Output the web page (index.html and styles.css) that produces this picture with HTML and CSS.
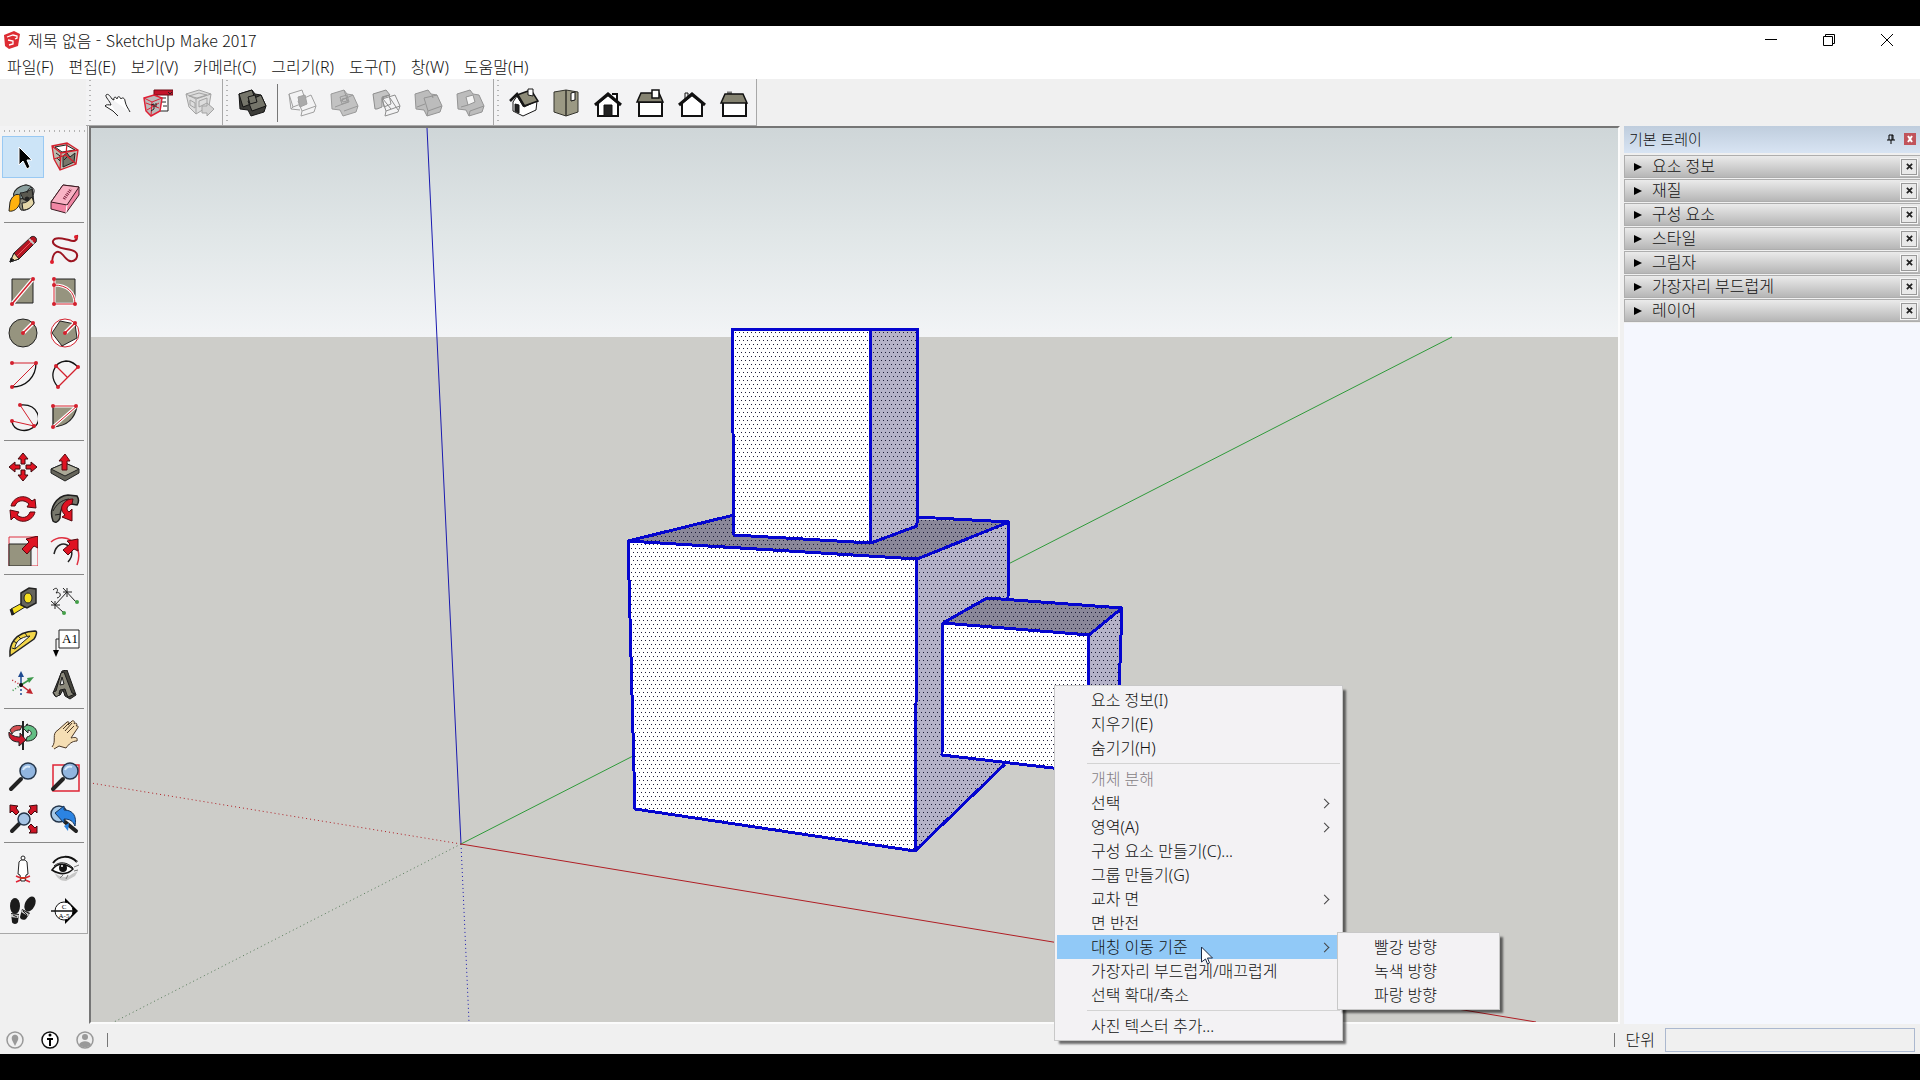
FILE: index.html
```html
<!DOCTYPE html>
<html lang="ko">
<head>
<meta charset="utf-8">
<title>제목 없음 - SketchUp Make 2017</title>
<link rel="stylesheet" href="styles.css">
</head>
<body>
<div class="window">
  <header class="titlebar">
    <svg class="logo" viewBox="0 0 16 18"><path d="M0 4 10 0l6 3-2 12-9 3-4-3z" fill="#dd2c33"/><path d="M3 6 9 4l4 1v2l-2 1M4 9l5 1v3l-4 1" fill="none" stroke="#fff" stroke-width="1.300"/></svg>
    <h1 class="title">제목 없음 - SketchUp Make 2017</h1>
    <div class="controls">
      <button aria-label="최소화"><svg viewBox="0 0 12 12"><path d="M0 5.5h12"/></svg></button>
      <button aria-label="이전 크기로"><svg viewBox="0 0 12 12"><path d="M.5 2.5h9v9h-9zM2.500 2.500v-2h9v9h-2"/></svg></button>
      <button aria-label="닫기"><svg viewBox="0 0 12 12"><path d="m0 0 12 12M12 0 0 12"/></svg></button>
    </div>
  </header>
  <nav class="menubar">
    <button>파일(F)</button><button>편집(E)</button><button>보기(V)</button><button>카메라(C)</button><button>그리기(R)</button><button>도구(T)</button><button>창(W)</button><button>도움말(H)</button>
  </nav>

  <div class="toolbars">
    <div class="toolbar">
      <button aria-label="상호 작용"><svg viewBox="0 0 30 30"><path d="M5 7c2-2 4 1 6 4l2 1c-1-3 2-4 3-1 0-3 3-3 4 0 1-2 4-1 4 2 1 5 3 7 5 11M5 7c-1 2 4 6 5 10-2 0-5-1-6 1l8 5 5 5" fill="#fff" stroke="#222"/></svg></button>
      <button aria-label="구성 요소 옵션"><svg viewBox="0 0 30 30"><path d="M14 5h11v18H14z" fill="#fff" stroke="#222"/><path d="M11 2h19v5H11z" fill="#c4142a" stroke="#6d0c16"/><path d="m25 4 2 2 2-2M17 10h6M19 14h4M20 18h4" stroke="#222" fill="none"/><path d="m1 10 10-3 8 3-2 13-9 5-5-5z" fill="#bbb" stroke="#df2035" stroke-width="1.500"/><path d="m1 10 8 4 10-4M9 14l-1 14M3 15l13 5M4 22l12-7" fill="none" stroke="#df2035"/><path d="m8 17 3-1v5l-3 2M13 15v4" stroke="#222" fill="none"/></svg></button>
      <button aria-label="구성 요소 특성"><svg viewBox="0 0 30 30" fill="none" stroke="#a3a3a3"><path d="m1 6 13-4 12 4-2 12-13 8-7-7z" fill="#ddd"/><path d="m1 6 10 5 15-5M11 11v15M4 8l10-3 8 2-10 3zM5 12l5 3v5l-5-3zM14 13l8-3v5l-8 4z"/><path d="M17 18h5v-3l7 6-7 7v-3h-5z" fill="#d2d2d2"/></svg></button>
    </div>
    <div class="toolbar">
      <button aria-label="외부 셸"><svg viewBox="0 0 30 30" fill="#75756a" stroke="#151515"><path d="m1 6 13-4 3 4 6 1 5 11-2 6-13 4-3-6-8-1z" fill="#3c3c38"/><path d="m1 6 13-4 4 12-13 5z"/><path d="m10 13 13-6 5 11-14 5z"/><path d="m10 9 7-2 2 7-7 2z"/></svg></button>
      <span class="divider"></span>
      <button aria-label="교차"><svg viewBox="0 0 30 30" fill="none" stroke="#a0a0a0"><path d="m1 6 13-4 4 12-13 5zM10 13l13-6 5 11-14 5zM1 6l2 15 9 1M14 23l-1 5 13-4 2-6M3 21l2-2"/><path d="m10 9 7-2 2 9-7 3z" fill="#aaa"/></svg></button>
      <button aria-label="결합"><svg viewBox="0 0 30 30" fill="#c2c2c2" stroke="#9a9a9a"><path d="m1 6 13-4 3 4 6 1 5 11-2 6-13 4-3-6-8-1z"/><path d="M14 2l4 12-13 5M10 13l13-6M14 23l14-5M10 9l7-2 2 7-7 2zM12 11l4-1 1 3-4 1z" fill="none"/></svg></button>
      <button aria-label="빼기"><svg viewBox="0 0 30 30" fill="none" stroke="#8e8e8e"><path d="m1 6 13-4 4 5-8 3v9l-5 2H3z" fill="#c4c4c4"/><path d="m10 11 13-4 5 11-14 5zM14 23l-1 5 13-4 2-6M11 11l8 10M10 9l7-2 2 9-7 3zM18 10l8 12"/></svg></button>
      <button aria-label="다듬기"><svg viewBox="0 0 30 30" fill="#bcbcbc" stroke="#949494"><path d="m1 6 13-4 3 4 6 1 5 11-2 6-13 4-3-6-8-1z"/><path d="M3 19l8-3M10 10l13-3M10 10l4 13 14-5M14 23l-1 5M18 7l1 3" fill="none"/></svg></button>
      <button aria-label="분할"><svg viewBox="0 0 30 30" fill="#bcbcbc" stroke="#949494"><path d="m1 6 13-4 3 4 6 1 5 11-2 6-13 4-3-6-8-1z"/><path d="m10 9 7-2 2 7-7 3z" fill="#f4f4f4"/><path d="M5 19l7-2M14 23l14-5M14 23l-1 5" fill="none"/></svg></button>
    </div>
    <div class="toolbar">
      <button aria-label="등각 투영"><svg viewBox="0 0 30 30" stroke="#161616"><path d="m4 14 4-6 7 11 13-6-1 9-13 6-10-5z" fill="#fff"/><path d="m8 7 14-5 7 11-14 5z" fill="#8d8b78" stroke-width="1.500"/><path d="M1 13 8 6l7 12" fill="none" stroke-width="2.500"/><path d="M6 16l4 1v8l-4-2z" fill="#222"/><path d="M19 1h5v7l-5-1z" fill="#fff"/></svg></button>
      <button aria-label="위"><svg viewBox="0 0 30 30" stroke="#33332c"><path d="m3 4 12-2 12 2v20l-12 4-12-4z" fill="#9b9984"/><path d="M15 2v26" stroke-width="1.500"/><path d="m20 5 4-1v8l-4 1z" fill="#fff" stroke="#111"/></svg></button>
      <button aria-label="앞"><svg viewBox="0 0 30 30" stroke="#111"><path d="M19 6h5v8M5 15 15 7l10 8v13H5z" fill="#fff" stroke-width="2"/><path d="M2 17 15 6l13 11" fill="none" stroke-width="3"/><path d="M11 17h8v11h-8z" fill="#222"/></svg></button>
      <button aria-label="오른쪽"><svg viewBox="0 0 30 30" stroke="#111"><path d="M4 14h23v14H4z" fill="#fff" stroke-width="2"/><path d="M6 5h18l4 9H2z" fill="#858371" stroke-width="1.500"/><path d="M17 2h7v8h-7z" fill="#fff" stroke-width="1.500"/></svg></button>
      <button aria-label="뒤"><svg viewBox="0 0 30 30" stroke="#111"><path d="M8 12V5h3v6" fill="#eee"/><path d="M5 15 15 7l10 8v13H5z" fill="#fff" stroke-width="2"/><path d="M2 17 15 6l13 11" fill="none" stroke-width="3"/></svg></button>
      <button aria-label="왼쪽"><svg viewBox="0 0 30 30" stroke="#111"><path d="M8 5h5" stroke-width="3" stroke="#777"/><path d="M4 14h23v14H4z" fill="#fff" stroke-width="2"/><path d="M6 6h18l4 9H2z" fill="#858371" stroke-width="1.500"/></svg></button>
    </div>
  </div>

  <main class="workspace">
    <aside class="palette">
      <div class="tools">
        <button class="selected" aria-label="선택"><svg viewBox="0 0 30 30"><path d="M11 5v18l4-4 4 8 3-2-3-7h5z" fill="#000" stroke="#fff"/></svg></button>
        <button aria-label="구성 요소"><svg viewBox="0 0 30 30" fill="none"><path d="m2 4 15-3 11 7-2 14-16 6-6-11z" fill="#bcbcb0"/><path d="m5 5 11-2 9 5-13 2z" fill="#fff" stroke="#222"/><path d="m13 14 4-3 3 4 5-4-1 9-11 5z" fill="#77776a" stroke="#222"/><path d="m6 11 4 3v5M14 18l4-4M7 16l4 4" stroke="#222"/><path d="m2 4 15-3 11 7-2 14-16 6-6-11zM2 4l9 7 17-3M11 11l-1 17M17 1l-1 12M4 17l12-4 10 9" stroke="#d3202d" stroke-width="1.300"/></svg></button>
        <button aria-label="페인트통"><svg viewBox="0 0 30 30" stroke="#222"><path d="m8 6 9-5c5 0 9 5 8 10l1 8c-3 6-9 8-13 7L7 15z" fill="#8f8d7c"/><path d="M14 19c4 0 7-2 10-6l2 6c-2 4-6 7-11 7z" fill="#e4d6a8"/><ellipse cx="15" cy="8" rx="10" ry="6" transform="rotate(-25 15 8)" fill="#8ba09f"/><path d="M12 9c4 0 8-2 12-4l1 8-9 3z" fill="#5a5950"/><path d="M19 9c2-9 10-6 6 2" fill="none"/><path d="M12 11c-4-2-8 1-10 7l-1 9c4 1 9-2 11-8z" fill="#ffb20f"/><circle cx="19" cy="15" r="2" fill="#222"/></svg></button>
        <button aria-label="지우개"><svg viewBox="0 0 30 30" stroke="#3b1b22"><path d="m1 18 12-17 16 2v8L16 29 1 25z" fill="#f086a4"/><path d="m1 18 12-17 16 2-12 18z" fill="#f9b3c5"/><path d="m17 21-1 8" stroke="#fff"/><path d="m14 15 7-10" stroke="#79203b" stroke-width="3" stroke-dasharray="1 1"/></svg></button>
      </div>
      <div class="tools">
        <button aria-label="선"><svg viewBox="0 0 30 30" stroke="#222"><path d="m2 28 4-9L23 3c3-2 7 1 5 5L11 25z" fill="#b51622"/><path d="m2 28 4-9 5 6z" fill="#eed9a5"/><path d="m9 22 16-16" stroke="#ef5a62"/><path d="m21 5 5 5" stroke="#ccc" stroke-width="2"/><path d="m2 28 1-4 3 2z" fill="#111"/></svg></button>
        <button aria-label="자유형"><svg viewBox="0 0 30 30"><path d="M2 28C3 16 9 16 13 21s8 9 13 4c4-7-3-9-10-10S2 11 3 7c2-5 11-2 16-1 5 2 9 1 8-5" fill="none" stroke="#9c1420" stroke-width="2"/><g fill="#df1f2d"><circle cx="2" cy="28" r="2"/><circle cx="26" cy="3" r="2"/></g></svg></button>
        <button aria-label="직사각형"><svg viewBox="0 0 30 30"><path d="M4 3h21v24H4z" fill="#96947f" stroke="#222"/><path d="M4 28 25 3" stroke="#fff" stroke-width="4"/><path d="M4 28 25 3" stroke="#d3202d" stroke-width="1.500"/><g fill="#d3202d"><circle cx="4" cy="28" r="2"/><circle cx="25" cy="3" r="2"/></g></svg></button>
        <button aria-label="회전 사각형"><svg viewBox="0 0 30 30"><path d="M4 3h21v24H4z" fill="#96947f" stroke="#222"/><path d="M4 2v26h21c0-12-8-19-21-19" fill="none" stroke="#fff" stroke-width="3"/><path d="M4 2v26h21c0-12-8-19-21-19" fill="none" stroke="#d3202d"/><g fill="#d3202d"><circle cx="4" cy="3" r="2"/><circle cx="4" cy="9" r="2"/><circle cx="4" cy="28" r="2"/><circle cx="25" cy="28" r="2"/></g></svg></button>
        <button aria-label="원"><svg viewBox="0 0 30 30"><circle cx="15" cy="15" r="14" fill="#96947f" stroke="#222"/><path d="m15 15 9-9" stroke="#fff" stroke-width="4"/><path d="m15 15 9-9" stroke="#d3202d" stroke-width="1.500"/><g fill="#d3202d"><circle cx="15" cy="15" r="2"/><circle cx="25" cy="5" r="2"/></g></svg></button>
        <button aria-label="다각형"><svg viewBox="0 0 30 30"><circle cx="15" cy="15" r="14" fill="#fff" stroke="#d3202d"/><path d="m2 15 8-12 15 3 2 14-15 8z" fill="#96947f" stroke="#222"/><path d="m15 15 9-9" stroke="#fff" stroke-width="4"/><path d="m15 15 9-9" stroke="#d3202d" stroke-width="1.500"/><g fill="#d3202d"><circle cx="15" cy="15" r="2"/><circle cx="25" cy="5" r="2"/></g></svg></button>
        <button aria-label="호"><svg viewBox="0 0 30 30" fill="none"><path d="M28 3c0 14-10 24-24 24" stroke="#111" stroke-width="1.300"/><path d="M4 3h24L4 27" stroke="#d3202d"/><g fill="#d3202d"><circle cx="4" cy="3" r="2"/><circle cx="28" cy="3" r="2"/><circle cx="4" cy="27" r="2"/></g></svg></button>
        <button aria-label="2점 호"><svg viewBox="0 0 30 30" fill="none"><path d="M8 27C-2 16 4 2 16 1c6 0 9 3 12 6" stroke="#111" stroke-width="1.300"/><path d="M8 27 28 7M6 6l11 11" stroke="#d3202d" stroke-width="1.300"/><g fill="#d3202d"><circle cx="6" cy="6" r="2"/><circle cx="28" cy="7" r="2"/><circle cx="8" cy="27" r="2"/></g></svg></button>
        <button aria-label="3점 호"><svg viewBox="0 0 30 30" fill="none"><path d="M12 3c19-2 23 17 14 22-8 6-20 4-22-5" stroke="#111" stroke-width="1.300"/><path d="m12 3 14 21-22-5" stroke="#d3202d"/><g fill="#d3202d"><circle cx="12" cy="3" r="2"/><circle cx="26" cy="24" r="2"/><circle cx="4" cy="19" r="2"/></g></svg></button>
        <button aria-label="파이"><svg viewBox="0 0 30 30"><path d="M3 4h24c-2 12-10 20-24 21z" fill="#96947f" stroke="#222" stroke-width="1.300"/><path d="M3 4h24L3 25" fill="none" stroke="#fff" stroke-width="3"/><path d="M3 4h24L3 25" fill="none" stroke="#d3202d"/><g fill="#d3202d"><circle cx="3" cy="4" r="2"/><circle cx="26" cy="4" r="2"/><circle cx="3" cy="25" r="2"/></g></svg></button>
      </div>
      <div class="tools">
        <button aria-label="이동"><svg viewBox="0 0 30 30" fill="#df1322" stroke="#3d0a0e"><path d="m15 1 5 6h-3v5h-4V7h-3z"/><path d="m15 1 5 6h-3v5h-4V7h-3z" transform="rotate(90 15 15)"/><path d="m15 1 5 6h-3v5h-4V7h-3z" transform="rotate(180 15 15)"/><path d="m15 1 5 6h-3v5h-4V7h-3z" transform="rotate(270 15 15)"/></svg></button>
        <button aria-label="밀기/끌기"><svg viewBox="0 0 30 30" stroke="#222"><path d="m1 17 14-6 14 6v4l-14 8-14-8z" fill="#65645a"/><path d="m1 17 14-6 14 6-14 7z" fill="#aaa896"/><path d="m15 2 5 7h-3v9h-5V9H9z" fill="#df1322" stroke="#5c0b12"/></svg></button>
        <button aria-label="회전"><svg viewBox="0 0 30 30" fill="#df1322" stroke="#54090f"><path d="M3 12C5 3 17-1 24 7l3-2 1 9-9-1 2-3C16 5 9 6 7 12z"/><path d="M27 18c-2 9-14 13-21 5l-3 3-1-10 9 2-2 3c5 4 11 3 13-3z"/></svg></button>
        <button aria-label="따라가기"><svg viewBox="0 0 30 30" stroke="#1d1d1d"><path d="M3 27C-2 14 7 2 18 1l9 1c2 3 2 6 0 9l-6-1C13 9 10 15 10 24c-2 5-5 5-7 3z" fill="#77776c" stroke-width="1.500"/><path d="M3 17c3-6 8-11 16-12M5 21l6-1" fill="none"/><path d="M12 12C15 6 19 5 23 5l-1 5c-6 2-6 6-3 8l3-3v12l-10-4 3-2c-3-3-4-6-3-9z" fill="#df1322" stroke="#54090f"/></svg></button>
        <button aria-label="배율"><svg viewBox="0 0 30 30"><path d="M1 1h29v29H1z" fill="none" stroke="#df3040"/><path d="M1 8h22v22H1z" fill="#96947f" stroke="#222"/><path d="M30 0v12l-4-2-7 8-5-5 7-7-3-3z" fill="#df1322" stroke="#54090f"/></svg></button>
        <button aria-label="오프셋"><svg viewBox="0 0 30 30" fill="none" stroke-width="1.500"><path d="M1 6C14-5 35 7 27 29" stroke="#df3040"/><path d="M4 18C6 8 13 7 17 9s8 9 1 17" stroke="#222"/><path d="M28 3v12l-4-2-6 6-5-5 7-6-3-3z" fill="#df1322" stroke="#54090f" stroke-width="1"/></svg></button>
      </div>
      <div class="tools">
        <button aria-label="줄자"><svg viewBox="0 0 30 30" stroke="#222"><path d="m3 23 11-6 3 4-13 8z" fill="#f6df20"/><path d="m13 7 8-5 7 1v14l-9 5-6-3z" fill="#66655d" stroke-width="1.500"/><ellipse cx="20" cy="12" rx="4" ry="5" fill="#f6df20"/><path d="m3 23 2 6" stroke-width="3"/></svg></button>
        <button aria-label="치수"><svg viewBox="0 0 30 30" fill="none" stroke="#222"><path d="M5 19 17 6M1 15l13 12M13 2l13 14M1 19h9M5 15v8M13 6h9M17 2v9"/><path d="M3 4c4-4 6 0 3 3 5-2 6 4 1 5" stroke-width="1"/><g fill="#45a049" stroke="none"><circle cx="14" cy="27" r="2"/><circle cx="27" cy="16" r="2"/></g></svg></button>
        <button aria-label="각도기"><svg viewBox="0 0 30 30" stroke="#222"><path d="M2 28C1 17 6 4 27 3c3 0 1 5-1 8z" fill="#f2d64a" stroke-width="1.500"/><path d="M7 21c0-7 5-12 15-13z" fill="#f4f4f4"/><path d="m4 20 3 1M5 13l4 2M10 8l3 3M17 5l2 3" /></svg></button>
        <button aria-label="텍스트"><svg viewBox="0 0 30 30"><path d="M9 2h20v18H9z" fill="#fff" stroke="#222"/><path d="M9 11H6v15" fill="none" stroke="#222"/><path d="M3 22h6l-3 7z"/><text x="12" y="15" class="mono">A1</text></svg></button>
        <button aria-label="축"><svg viewBox="0 0 30 30" fill="none" stroke-width="1.500"><path d="M13 15V5" stroke="#1f4b91"/><path d="m10 7 3-6 3 6z" fill="#1f4b91"/><path d="m13 15 8-5" stroke="#3b984a"/><path d="m19 8 7-1-5 6z" fill="#3b984a"/><path d="m13 15 8 6" stroke="#c1242d"/><path d="m22 18 3 6-7-1z" fill="#c1242d"/><path d="m13 15-9-5" stroke="#c1242d" stroke-dasharray="1 2"/><path d="m13 15-9 6" stroke="#3b984a" stroke-dasharray="1 2"/><path d="M13 15v12" stroke="#1f4b91" stroke-dasharray="2 2"/><circle cx="13" cy="15" r="2" fill="#111"/></svg></button>
        <button aria-label="3D 텍스트"><svg viewBox="0 0 30 30" stroke="#1c1c1c"><path d="m3 23 9-22 5-1 9 25-6 4-5-3-2-6-3 5-5 1z" fill="#45443c"/><path d="m3 22 3-1 5-18 3-1 8 21 3 1-7 3-1-2-2-6-5 1-1 4h2l-5 3z" fill="#8b897b"/><path d="m10 15 2-8 2 7z" fill="#f1f1f1"/></svg></button>
      </div>
      <div class="tools">
        <button aria-label="궤도"><svg viewBox="0 0 30 30" stroke="#222"><path d="M2 10c3-5 8-5 12-4l-2 4c-5 0-7 2-8 4z" fill="#d55154"/><path d="M18 5c15 0 14 17 0 16l1-4c5-1 6-6 1-7v3l-5-5 5-4z" fill="#63bf85"/><path d="M15 1v29" stroke-width="2"/><path d="M1 12c3 4 7 5 11 5v-4l6 7-7 6v-4C5 22 0 19 1 12z" fill="#c9182c"/></svg></button>
        <button aria-label="이동 보기"><svg viewBox="0 0 30 30"><path d="M2 27c5-6-1-13 6-17l9-8c2-1 3 1 1 3l4-4c2-1 3 1 2 3 2-2 4 0 2 2 2-1 3 1 1 3l-6 9c4-1 7-1 6 3-5 0-8 3-11 7l-7-2-5 3" fill="#f5deb4" stroke="#493625"/><path d="m13 9 6-6M15 11l7-8M17 13l7-7" stroke="#493625"/></svg></button>
        <button aria-label="확대/축소"><svg viewBox="0 0 30 30"><path d="m3 27 10-10" stroke="#222" stroke-width="4" stroke-linecap="round"/><circle cx="20" cy="9" r="8" fill="#91b5df" stroke="#24354a" stroke-width="1.500"/><path d="M15 8c1-3 4-4 7-3" stroke="#d9eafa" stroke-width="2" fill="none"/></svg></button>
        <button aria-label="창 확대"><svg viewBox="0 0 30 30"><path d="M3 3h26v26H3z" fill="none" stroke="#df2435" stroke-width="1.500"/><path d="m3 27 10-10" stroke="#222" stroke-width="4" stroke-linecap="round"/><circle cx="20" cy="9" r="8" fill="#91b5df" stroke="#24354a" stroke-width="1.500"/><path d="M15 8c1-3 4-4 7-3" stroke="#d9eafa" stroke-width="2" fill="none"/></svg></button>
        <button aria-label="범위 확대"><svg viewBox="0 0 30 30"><g fill="#cf1525" stroke="#3d0a0e"><path d="m2 1 8 1-2 2 3 4-3 3-4-4-2 2zM29 1v8l-2-2-4 4-3-3 3-4-2-2zM29 29h-8l2-2-3-4 3-3 4 4 2-2z"/></g><path d="m4 27 7-7" stroke="#222" stroke-width="4" stroke-linecap="round"/><circle cx="16" cy="15" r="6" fill="#a6c4e5" stroke="#24354a" stroke-width="1.500"/></svg></button>
        <button aria-label="이전"><svg viewBox="0 0 30 30"><circle cx="9" cy="10" r="8" fill="#a7c9e7" stroke="#24354a" stroke-width="1.500"/><path d="m15 18 11 9" stroke="#222" stroke-width="4" stroke-linecap="round"/><path d="m5 9 9-7v4c9 0 13 6 11 16-2-5-5-7-11-7v4z" fill="#2b83e2" stroke="#17375e"/><path d="m14 22 5-3-1 8z" fill="#2b83e2"/></svg></button>
      </div>
      <div class="tools last">
        <button aria-label="카메라 배치"><svg viewBox="0 0 30 30"><path d="m8 22 14 6M22 22 8 28" stroke="#df2435" stroke-width="1.500"/><path d="M11 8c2-3 6-3 8 0l1 12-2 1-1 6h-4l-1-6-2-1z" fill="#fff" stroke="#222"/><circle cx="15" cy="4" r="2" fill="#fff" stroke="#222"/><path d="M12 24h6" stroke="#c32" stroke-width="2"/></svg></button>
        <button aria-label="둘러보기"><svg viewBox="0 0 30 30" fill="none"><path d="M4 18c4 5 13 7 18 2l6-3-3 5-9 5c-6 0-9-3-12-9z" fill="#c7c7c7"/><path d="M3 9C9 1 20 1 27 8" stroke="#111" stroke-width="2"/><path d="M2 16C7 9 14 8 23 15c-6 6-13 6-21 1z" fill="#fff" stroke="#111" stroke-width="1.500"/><path d="M4 12c6-5 13-4 19 2" stroke="#111"/><circle cx="13" cy="14" r="4" fill="#111"/><circle cx="12" cy="12" r="1" fill="#fff"/><path d="m24 13 5-2M24 17l4-1M16 25l2-4M10 24l3-3M26 8l2-1" stroke="#777"/></svg></button>
        <button aria-label="걷기"><svg viewBox="0 0 30 30" fill="#1b1b1b"><ellipse cx="7" cy="10" rx="5" ry="8"/><path d="m3 17 8 1-1 8c-1 3-6 2-6 0z"/><ellipse cx="22" cy="8" rx="5" ry="8" transform="rotate(25 22 8)"/><path d="m14 13 8 4-4 6c-3 2-6 0-6-2z"/><path d="m3 18 8 1-1 3-7-1zM14 14l7 4-1 2-7-4z" fill="#ccc"/><path d="m5 19 4 2M15 15l4 4" stroke="#222"/></svg></button>
        <button aria-label="단면"><svg viewBox="0 0 30 30"><path d="m15 2 13 13-13 13z"/><circle cx="14" cy="15" r="9" fill="#fff" stroke="#111"/><path d="M1 15h26" stroke="#111" stroke-width="1.500"/><text x="14" y="13" text-anchor="middle" class="tiny">C</text><text x="14" y="22" text-anchor="middle" class="tiny">A-5</text></svg></button>
      </div>
    </aside>

    <section class="viewport" aria-label="모델">
      <svg class="scene" viewBox="90 128 1528 894" preserveAspectRatio="xMinYMin slice">
        <defs>
          <linearGradient id="sky" x1="0" y1="0" x2="0" y2="1"><stop offset="0" stop-color="#cfd6d8"/><stop offset=".5" stop-color="#e0e6e7"/><stop offset="1" stop-color="#f2f4f6"/></linearGradient>
          <pattern id="dots" width="4" height="8" patternUnits="userSpaceOnUse"><path d="M0 0h1v1H0zM2 4h1v1H2z" fill="#1c1c38" shape-rendering="crispEdges"/></pattern>
        </defs>
        <path d="M90 128h1528v209H90z" fill="url(#sky)"/>
        <path d="M90 337h1528v685H90z" fill="#cdcdc9"/>
        <g fill="none" stroke-width="1">
          <path d="M460 844 426 128" stroke="#1a1ab0"/>
          <path d="m460 844 8 178" stroke="#1a1ab0" stroke-dasharray="1 3"/>
          <path d="m460 844 991-507" stroke="#2f9a3a"/>
          <path d="m460 844-347 178" stroke="#557a58" stroke-dasharray="1 3"/>
          <path d="m460 844 1075 178" stroke="#b01e24"/>
          <path d="M460 844 90 783" stroke="#b01e24" stroke-dasharray="1 3"/>
        </g>
        <g>
          <path d="M627 541 733 515 1008 522 916 559z" fill="#8a8799"/>
          <path d="m627 541 289 18-2 292-280-42z" fill="#fff"/>
          <path d="m916 559 92-37-4 242-90 87z" fill="#b5b2c8"/>
          <path d="M731 329h138l1 214-137-8z" fill="#fff"/>
          <path d="M869 329h48l-1 197-46 17z" fill="#b5b2c8"/>
        </g>
        <path d="M731 329h186l-1 187 92 6-4 242-90 87-280-42-7-268 106-26z" fill="url(#dots)"/>
        <g class="edges">
          <path d="m733 515-106 26 7 268 280 42 90-87M627 541l289 18 92-37-92-5M916 559l-2 292M1008 522l-1 76"/>
          <path d="M731 329h186l-1 197-46 17-137-8zM869 329l1 214"/>
        </g>
        <path d="m942 623 44-25 135 10-33 27z" fill="#8a8799"/>
        <path d="m942 623 146 12-2 137-145-17z" fill="#fff"/>
        <path d="m1088 635 33-27-5 139-30 25z" fill="#b5b2c8"/>
        <path d="m942 623 44-25 135 10-5 139-30 25-145-17z" fill="url(#dots)"/>
        <path class="edges" d="m942 623 44-25 135 10-5 139-30 25-145-17zl146 12 33-27M1088 635l-2 137"/>
      </svg>
    </section>

    <aside class="tray">
      <header class="tray-head"><h2>기본 트레이</h2>
        <button class="pin" aria-label="고정"><svg viewBox="0 0 8 10"><path d="M2 6V1h4v5M0 6h8M4 6v4M5 1v5" fill="none" stroke="#000" stroke-width="1"/></svg></button>
        <button class="tray-close" aria-label="닫기"><svg viewBox="0 0 8 8"><path d="m2 1 4 6M6 1 2 7"/></svg></button>
      </header>
      <ul class="panels">
        <li><button class="panel"><i></i>요소 정보</button><button class="x" aria-label="닫기"><svg viewBox="0 0 8 8"><path d="m1 1 6 6M7 1 1 7"/></svg></button></li>
        <li><button class="panel"><i></i>재질</button><button class="x" aria-label="닫기"><svg viewBox="0 0 8 8"><path d="m1 1 6 6M7 1 1 7"/></svg></button></li>
        <li><button class="panel"><i></i>구성 요소</button><button class="x" aria-label="닫기"><svg viewBox="0 0 8 8"><path d="m1 1 6 6M7 1 1 7"/></svg></button></li>
        <li><button class="panel"><i></i>스타일</button><button class="x" aria-label="닫기"><svg viewBox="0 0 8 8"><path d="m1 1 6 6M7 1 1 7"/></svg></button></li>
        <li><button class="panel"><i></i>그림자</button><button class="x" aria-label="닫기"><svg viewBox="0 0 8 8"><path d="m1 1 6 6M7 1 1 7"/></svg></button></li>
        <li><button class="panel"><i></i>가장자리 부드럽게</button><button class="x" aria-label="닫기"><svg viewBox="0 0 8 8"><path d="m1 1 6 6M7 1 1 7"/></svg></button></li>
        <li><button class="panel"><i></i>레이어</button><button class="x" aria-label="닫기"><svg viewBox="0 0 8 8"><path d="m1 1 6 6M7 1 1 7"/></svg></button></li>
      </ul>
    </aside>
  </main>

  <footer class="status">
    <button aria-label="위치"><svg viewBox="0 0 20 20"><circle cx="10" cy="10" r="8" fill="none" stroke="#999" stroke-width="1.500"/><path d="M10 16 7 10C5 3 15 3 13 10z" fill="#999"/></svg></button>
    <button aria-label="제작자"><svg viewBox="0 0 20 20"><circle cx="10" cy="10" r="8" fill="#fff" stroke="#111" stroke-width="1.500"/><circle cx="10" cy="5" r="1.500"/><path d="M7 8h6v2h-2v6H9v-6H7z"/></svg></button>
    <button aria-label="로그인"><svg viewBox="0 0 20 20"><circle cx="10" cy="10" r="8" fill="#eee" stroke="#999" stroke-width="1.500"/><circle cx="10" cy="7" r="3" fill="#999"/><path d="M4 15c1-5 11-5 12 0-3 3-9 3-12 0z" fill="#999"/></svg></button>
    <span class="bar"></span>
    <span class="bar right"></span>
    <label for="measure">단위</label>
    <input id="measure" type="text">
  </footer>

  <div class="menu context" role="menu">
    <button role="menuitem">요소 정보(I)</button>
    <button role="menuitem">지우기(E)</button>
    <button role="menuitem">숨기기(H)</button>
    <hr>
    <button role="menuitem" disabled>개체 분해</button>
    <button role="menuitem" class="sub">선택</button>
    <button role="menuitem" class="sub">영역(A)</button>
    <button role="menuitem">구성 요소 만들기(C)...</button>
    <button role="menuitem">그룹 만들기(G)</button>
    <button role="menuitem" class="sub">교차 면</button>
    <button role="menuitem">면 반전</button>
    <button role="menuitem" class="sub active">대칭 이동 기준</button>
    <button role="menuitem">가장자리 부드럽게/매끄럽게</button>
    <button role="menuitem">선택 확대/축소</button>
    <hr>
    <button role="menuitem">사진 텍스터 추가...</button>
  </div>
  <div class="menu submenu" role="menu">
    <button role="menuitem">빨강 방향</button>
    <button role="menuitem">녹색 방향</button>
    <button role="menuitem">파랑 방향</button>
  </div>
  <svg class="pointer" viewBox="0 0 12 19"><path d="M.5 1v15l4-3 2 5 2-1-2-5h5z" fill="#fff" stroke="#1c2a44"/></svg>
</div>
</body>
</html>
```
FILE: styles.css
```css
* { box-sizing: border-box; }
body {
  margin: 0;
  min-height: 100vh;
  padding: 26px 0;
  display: flex;
  background: #000;
  color: #111;
  font: 300 16px/24px "Noto Sans", "Noto Sans CJK KR", sans-serif;
}
button {
  margin: 0;
  padding: 0;
  border: 0;
  background: none;
  color: inherit;
  font: inherit;
}
svg { display: block; }
h1, h2 { margin: 0; font-size: 16px; font-weight: 300; }

.window {
  position: relative;
  flex: 1;
  min-width: 0;
  display: flex;
  flex-direction: column;
  background: #f0f0f0;
}

.titlebar { display: flex; align-items: center; height: 28px; padding: 0 4px; background: #fff; }
.logo { width: 16px; height: 18px; }
.title { flex: 1; padding-left: 8px; font-family: "Noto Sans CJK KR", sans-serif; }
.controls { display: flex; }
.controls button { width: 58px; height: 28px; display: grid; place-items: center; }
.controls svg { width: 12px; height: 12px; fill: none; stroke: #000; }

.menubar { display: flex; gap: 15px; height: 25px; padding: 0 7px; background: #fff; }

.toolbars { display: flex; height: 47px; padding-left: 86px; background: #f0f0f0; }
.toolbar {
  display: flex;
  align-items: center;
  padding: 2px 1px 0 9px;
  border-right: 1px solid #a8a8a8;
  border-bottom: 1px solid #a8a8a8;
  background: radial-gradient(circle, #b4b4b4 1px, transparent 1px) 2px 4px / 4px 5px repeat-y, #f3f3f4;
}
.toolbar button { width: 42px; height: 42px; display: grid; place-items: center; }
.toolbar svg, .tools svg { width: 30px; height: 30px; }
.divider { width: 2px; height: 38px; margin: 0 3px; border-left: 1px solid #777; }

.workspace { flex: 1; display: flex; min-height: 0; }
.palette {
  align-self: flex-start;
  width: 88px;
  padding: 10px 0 0 2px;
  border-right: 1px solid #a8a8a8;
  border-bottom: 1px solid #a8a8a8;
  background: radial-gradient(circle, #b4b4b4 1px, transparent 1px) 2px 3px / 5px 4px repeat-x, #f3f3f4;
}
.tools { display: grid; grid-template-columns: 42px 42px; padding-bottom: 8px; background: linear-gradient(#888, #888) 2px calc(100% - 5px) / 80px 1px no-repeat; }
.tools.last { padding-bottom: 1px; background: none; }
.tools button { height: 42px; display: grid; place-items: center; }
.tools .selected { border: 1px solid #99c9f3; background: #cce4f7; }
.mono { font: 13px "Liberation Serif", serif; }
.tiny { font: 7px "Liberation Serif", serif; }

.viewport {
  position: relative;
  flex: 1;
  border: 2px solid #fbfbfb;
  border-top-color: #757575;
  border-left-color: #757575;
  margin-left: 1px;
  overflow: hidden;
}
.scene { position: absolute; inset: 0; width: 100%; height: 100%; }
.edges { fill: none; stroke: #0505cf; stroke-width: 3; stroke-linejoin: round; shape-rendering: crispEdges; }

.tray { width: 300px; display: flex; flex-direction: column; background: #f5f7fe; border-left: 4px solid #f0f0f0; }
.tray-head { display: flex; align-items: center; height: 27px; padding: 0 4px 2px 5px; background: linear-gradient(#bfcddd, #d8e4f3); }
.tray-head h2 { flex: 1; font-size: 15px; }
.pin { margin-right: 9px; }
.pin svg { width: 8px; height: 10px; }
.tray-close { width: 12px; height: 12px; display: grid; place-items: center; background: #c1545b; }
.tray-close svg { width: 8px; height: 8px; stroke: #fff; stroke-width: 2; }
.panels { margin: 0; padding: 2px 0 0; list-style: none; background: #f0f0f0; }
.panels li { display: flex; align-items: center; height: 23px; margin-bottom: 1px; padding: 0 3px 0 9px; border: 1px solid #aeaeae; border-right: 0; background: linear-gradient(#ebebeb, #b6b6b6); }
.panel { flex: 1; display: flex; align-items: center; gap: 10px; line-height: 21px; }
.panel i { border: solid transparent; border-width: 4px 0 4px 8px; border-left-color: #000; }
.x { width: 16px; height: 16px; display: grid; place-items: center; border: 1px solid #999; outline: 1px solid #f6f6f6; background: #e9e9e9; }
.x svg { width: 7px; height: 7px; stroke: #222; stroke-width: 2; }

.status { display: flex; align-items: center; height: 30px; padding: 2px 5px 0; }
.status button { margin-right: 15px; }
.status svg { width: 20px; height: 20px; }
.bar { height: 14px; margin-left: -3px; border-left: 1px solid #777; }
.bar.right { margin-left: auto; margin-right: 11px; }
.status input { width: 250px; height: 24px; margin-left: 10px; border: 1px solid #abb8cf; background: #f0f0f0; }

.menu {
  position: absolute;
  display: flex;
  flex-direction: column;
  padding: 1px 2px 2px;
  border: 1px solid #c8c8c8;
  background: #f3f2f4;
  box-shadow: 4px 4px 2px -1px rgba(0, 0, 0, .55);
}
.menu button { height: 24px; padding-left: 34px; text-align: left; white-space: nowrap; }
.menu button:disabled { color: #857f85; }
.menu hr { height: 1px; margin: 3px 0 3px 30px; border: 0; background: #d3d3d3; }
.menu .sub { display: flex; align-items: center; justify-content: space-between; padding-right: 12px; }
.menu .sub::after { content: ""; width: 6px; height: 6px; border: solid #444; border-width: 1px 1px 0 0; transform: rotate(45deg); }
.menu .active { background: #91c9f7; }
.context { left: 1054px; top: 659px; width: 289px; padding-top: 2px; }
.submenu { left: 1337px; top: 906px; width: 163px; padding-top: 2px; }
.pointer { position: absolute; left: 1201px; top: 920px; width: 12px; height: 19px; }
```
